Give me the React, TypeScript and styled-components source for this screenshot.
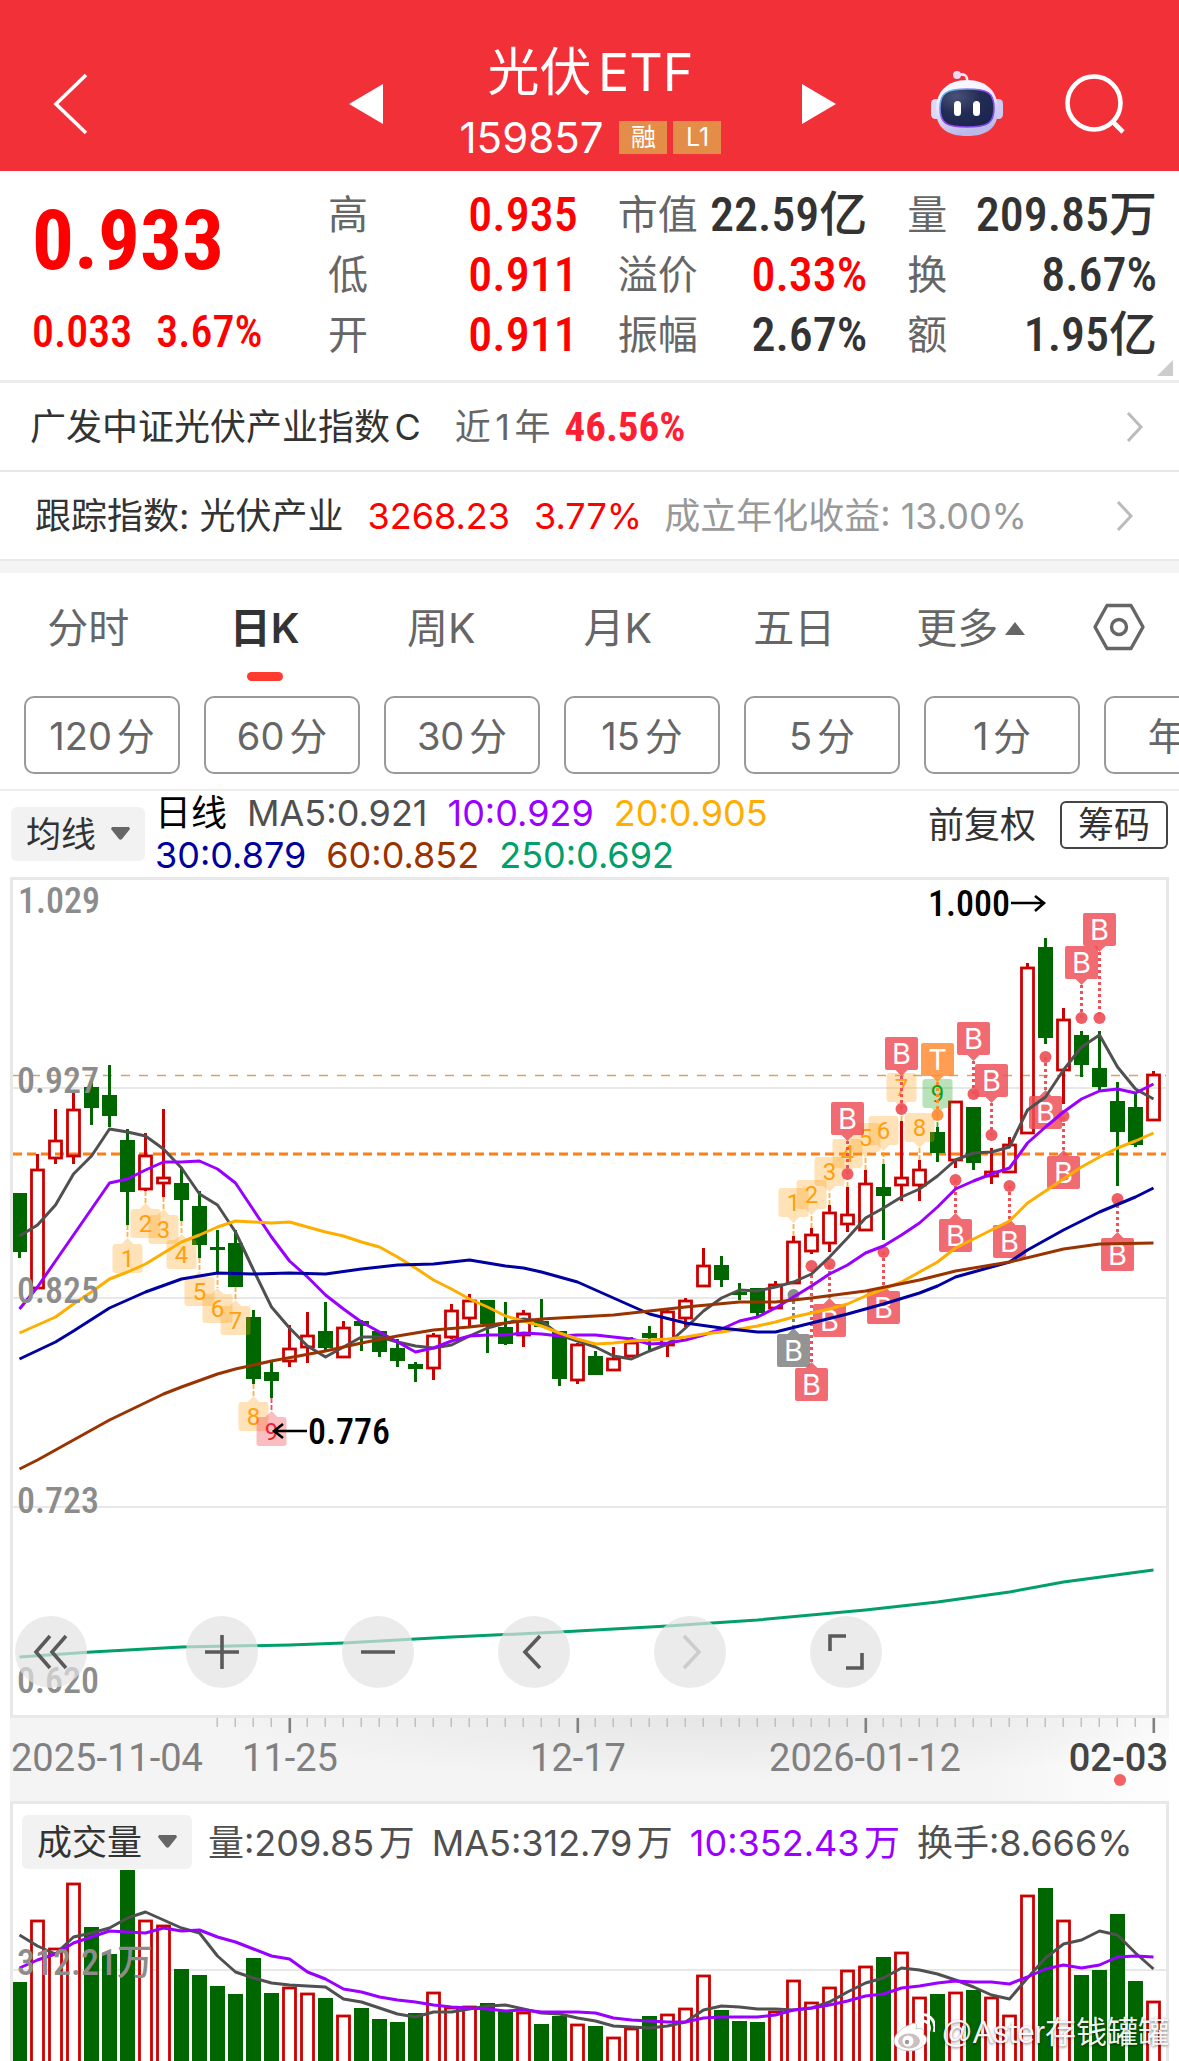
import React from "react";
import styled, { createGlobalStyle } from "styled-components";

const SANS = 'Inter, "Noto Sans CJK SC", sans-serif';
const DIN = '"Roboto Condensed", Roboto, "Noto Sans CJK SC", sans-serif';

const RED = "#ff0000";
const UP = "#cc0000";
const DOWN = "#006600";
const GRAY_LINE = "#505050";
const PURPLE = "#9900ff";
const AMBER = "#ffae00";
const NAVY = "#0000a0";
const BROWN = "#993300";
const TEAL = "#009f6b";
const GRID = "#e8e8e8";

const GlobalStyle = createGlobalStyle`
  *, *::before, *::after { box-sizing: border-box; }
  body { margin: 0; background: #fff; font-family: ${SANS}; color: #333; text-autospace: normal; }
  button, select { font: inherit; color: inherit; border: 0; background: none; padding: 0; margin: 0; cursor: pointer; text-autospace: inherit; }
  a { color: inherit; text-decoration: none; }
  svg { display: block; }
`;

const Page = styled.main`
  position: relative;
  width: 100%;
  overflow: hidden;
`;

/* ---------- header ---------- */

const Header = styled.header`
  display: grid;
  grid-template-columns: 1fr 488px 1fr;
  align-items: center;
  height: 171px;
  padding: 36px 0 0 6px;
  background: #f23038;
  color: #fff;
`;

const HeaderLeft = styled.div`
  padding-left: 46px;
`;

const HeaderCenter = styled.div`
  display: flex;
  align-items: center;
  justify-content: space-between;
`;

const HeaderRight = styled.div`
  display: flex;
  align-items: center;
  justify-content: flex-end;
  gap: 61px;
  padding-right: 53px;
`;

const IconButton = styled.button`
  display: block;
`;

const TitleBlock = styled.div`
  padding: 2px 4px 0 0;
  text-align: center;
`;

const Title = styled.h1`
  margin: 0;
  font-size: 52px;
  line-height: 66px;
  font-weight: 400;
`;

const CodeRow = styled.div`
  display: flex;
  align-items: center;
  justify-content: center;
  gap: 6px;
  height: 64px;
  font-size: 42px;
`;

const Code = styled.span`
  padding-right: 10px;
`;

const Badge = styled.span`
  width: 48px;
  height: 33px;
  background: #e38d49;
  font-size: 25px;
  line-height: 32px;
  text-align: center;
`;

/* ---------- quote ---------- */

const Quote = styled.section`
  position: relative;
  display: flex;
  height: 212px;
  padding: 14px 22px 0 32px;
  border-bottom: 3px solid #ececec;
  text-autospace: no-autospace;
`;

const PriceBlock = styled.div`
  flex: 0 0 296px;
  color: ${RED};
  font-family: ${DIN};
  font-weight: 500;
`;

const Price = styled.div`
  font-size: 83px;
  font-weight: 700;
  line-height: 112px;
`;

const Change = styled.div`
  display: flex;
  gap: 24px;
  font-size: 44px;
  line-height: 50px;
  padding-top: 10px;
`;

const Stats = styled.dl`
  flex: 1;
  display: grid;
  grid-template-columns: repeat(3, 1fr);
  grid-template-rows: repeat(3, 60px);
  column-gap: 40px;
  margin: 0;
`;

const Stat = styled.div`
  display: flex;
  justify-content: space-between;
  align-items: center;
  line-height: 60px;
  white-space: nowrap;
`;

const StatLabel = styled.dt`
  font-size: 40px;
  color: #666;
`;

const StatValue = styled.dd<{ $color?: string }>`
  margin: 0;
  font-family: ${DIN};
  font-weight: 500;
  font-size: 48px;
  color: ${(p) => p.$color || "#333"};
`;

const Corner = styled.svg`
  position: absolute;
  right: 6px;
  bottom: 4px;
`;

/* ---------- linked rows ---------- */

const LinkRow = styled.a<{ $indent: number; $end: number }>`
  display: flex;
  align-items: center;
  height: 89px;
  padding: 0 ${(p) => p.$end}px 0 ${(p) => p.$indent}px;
  border-bottom: 2px solid #e8e8e8;
  font-size: 36px;
  line-height: 48px;
  white-space: nowrap;
`;

const Cell = styled.span<{ $color?: string; $gap?: number; $weight?: number }>`
  color: ${(p) => p.$color || "#333"};
  margin-left: ${(p) => p.$gap || 0}px;
  font-weight: ${(p) => p.$weight || 400};
`;

const RowValue = styled(Cell)`
  font-family: ${DIN};
  font-size: 41px;
`;

const RowChevron = styled.svg`
  margin-left: auto;
`;

const Band = styled.div`
  height: 12px;
  background: #f4f4f4;
`;

/* ---------- period tabs ---------- */

const Tabs = styled.nav`
  display: grid;
  grid-template-columns: repeat(6, 1fr) 120px;
  height: 123px;
  padding-top: 30px;
  text-autospace: no-autospace;
`;

const Tab = styled.button<{ $active?: boolean }>`
  display: flex;
  flex-direction: column;
  align-items: center;
  font-size: 41px;
  line-height: 50px;
  font-weight: ${(p) => (p.$active ? 600 : 400)};
  color: ${(p) => (p.$active ? "#333" : "#666")};

  &::after {
    content: "";
    width: 36px;
    height: 9px;
    margin-top: 19px;
    border-radius: 5px;
    background: ${(p) => (p.$active ? "#ff3b30" : "transparent")};
  }
`;

const TabLabel = styled.span`
  display: flex;
  align-items: center;
  gap: 7px;
`;

const Chips = styled.div`
  display: flex;
  gap: 24px;
  padding: 0 0 15px 24px;
  border-bottom: 2px solid #ececec;
  overflow: hidden;
`;

const Chip = styled.button`
  flex: 0 0 156px;
  height: 78px;
  padding-bottom: 4px;
  border: 2px solid #999;
  border-radius: 10px;
  font-size: 38px;
  color: #666;
`;

/* ---------- indicator legends ---------- */

const Legend = styled.div`
  display: flex;
  align-items: center;
  height: 86px;
  padding: 0 11px;
`;

const Picker = styled.label<{ $w: number }>`
  position: relative;
  flex: 0 0 ${(p) => p.$w}px;
  height: 54px;
  border-radius: 6px;
  background: #f2f2f2;

  select {
    width: 100%;
    height: 54px;
    padding-left: 15px;
    appearance: none;
    font-size: 35px;
    color: #333;
  }
  svg {
    position: absolute;
    right: 15px;
    top: 20px;
    pointer-events: none;
  }
`;

const LegendLines = styled.div`
  flex: 1;
  padding-left: 10px;
  font-size: 36px;
  line-height: 42px;
`;

const LegendLine = styled.div`
  display: flex;
  gap: 20px;
`;

const Tint = styled.span<{ $color: string }>`
  color: ${(p) => p.$color};
  white-space: nowrap;
`;

const LegendActions = styled.div`
  display: flex;
  align-items: center;
  align-self: flex-start;
  gap: 24px;
  padding-top: 5px;
  font-size: 36px;
`;

const PlainButton = styled.button`
  padding-bottom: 6px;
  color: #333;
`;

const OutlineButton = styled.button`
  width: 108px;
  height: 48px;
  border: 2px solid #444;
  border-radius: 6px;
  line-height: 42px;
`;

/* ---------- charts ---------- */

const ChartFrame = styled.section`
  position: relative;
  margin: 0 10px;
  border: 3px solid ${GRID};

  > svg {
    width: 100%;
    height: auto;
  }
`;

const ChartTools = styled.div`
  position: absolute;
  left: 2px;
  bottom: 27px;
  display: flex;
  gap: 84px;

  button:first-child {
    margin-right: 15px;
  }
`;

const RoundButton = styled.button`
  width: 72px;
  height: 72px;
  border-radius: 50%;
  background: rgba(227, 227, 227, 0.7);
  display: grid;
  place-items: center;
`;

const Ruler = styled.div`
  margin: 0 10px;
  background: radial-gradient(ellipse 46% 75% at 62% 0, #e6e6e6, rgba(230, 230, 230, 0)),
    linear-gradient(90deg, #f4f4f4 84%, #fdfdfd 98%);

  svg {
    width: 100%;
    height: auto;
  }
`;

const VolumeFrame = styled(ChartFrame)`
  border-bottom: 0;
`;

const VolumeLegend = styled.div`
  display: flex;
  align-items: center;
  height: 66px;
  padding: 10px 0 0 9px;
  font-size: 36px;
  white-space: nowrap;
`;

const VolumeItems = styled.div`
  display: flex;
  gap: 17px;
  padding: 0 0 4px 16px;
`;

const Watermark = styled.div`
  position: absolute;
  right: 10px;
  bottom: 6px;
  display: flex;
  align-items: center;
  gap: 6px;
  color: rgba(255, 255, 255, 0.95);
  font-size: 31px;
  line-height: 44px;
  font-family: "Liberation Sans", "Noto Sans CJK SC", sans-serif;
  text-autospace: no-autospace;
  text-shadow: 0 1px 3px rgba(0, 0, 0, 0.55);
`;

/* ---------- data ---------- */

const STEP = 18;
const FIRST = 19.5;
const cx = (i: number) => FIRST + i * STEP;

/* rise flag, high, body top, body bottom, low */
const candles: [0 | 1, number, number, number, number][] = [
  [0, 1193, 1193, 1252, 1258], [1, 1154, 1169, 1289, 1289], [1, 1109, 1140, 1159, 1164], [1, 1092, 1109, 1157, 1164],
  [0, 1080, 1087, 1108, 1125], [0, 1065, 1095, 1116, 1127], [0, 1129, 1140, 1192, 1225], [1, 1133, 1155, 1190, 1191],
  [1, 1109, 1177, 1184, 1197], [0, 1167, 1183, 1200, 1221], [0, 1191, 1206, 1245, 1258], [0, 1230, 1247, 1250, 1273],
  [0, 1230, 1243, 1287, 1287], [0, 1310, 1317, 1379, 1384], [0, 1360, 1372, 1381, 1398], [1, 1325, 1348, 1362, 1367],
  [1, 1312, 1335, 1348, 1363], [0, 1302, 1331, 1348, 1350], [1, 1321, 1327, 1358, 1358], [0, 1320, 1321, 1326, 1351],
  [0, 1331, 1331, 1352, 1357], [0, 1339, 1348, 1361, 1367], [0, 1362, 1364, 1369, 1382], [1, 1333, 1335, 1369, 1380],
  [1, 1304, 1310, 1338, 1339], [1, 1294, 1300, 1319, 1327], [0, 1300, 1300, 1324, 1353], [0, 1302, 1327, 1344, 1345],
  [1, 1310, 1313, 1336, 1347], [0, 1299, 1321, 1327, 1327], [0, 1331, 1331, 1379, 1386], [1, 1343, 1344, 1381, 1384],
  [0, 1351, 1356, 1375, 1375], [1, 1347, 1358, 1371, 1371], [1, 1337, 1342, 1357, 1357], [0, 1326, 1333, 1338, 1351],
  [1, 1310, 1311, 1346, 1357], [1, 1298, 1300, 1319, 1327], [1, 1248, 1265, 1287, 1287], [0, 1256, 1265, 1280, 1287],
  [0, 1283, 1292, 1295, 1300], [0, 1288, 1288, 1313, 1317], [1, 1281, 1284, 1309, 1309], [1, 1236, 1241, 1284, 1284],
  [1, 1228, 1234, 1252, 1254], [1, 1205, 1212, 1244, 1252], [1, 1187, 1214, 1225, 1232], [1, 1170, 1183, 1231, 1231],
  [0, 1164, 1187, 1196, 1240], [1, 1121, 1177, 1186, 1201], [1, 1160, 1169, 1186, 1201], [0, 1127, 1132, 1153, 1162],
  [1, 1101, 1101, 1161, 1168], [0, 1107, 1107, 1163, 1170], [1, 1148, 1171, 1177, 1184], [1, 1137, 1144, 1173, 1173],
  [1, 963, 967, 1134, 1134], [0, 938, 947, 1038, 1044], [1, 1008, 1019, 1071, 1104], [0, 1031, 1035, 1065, 1077],
  [0, 1031, 1068, 1087, 1090], [0, 1082, 1101, 1132, 1186], [0, 1093, 1107, 1145, 1147], [1, 1071, 1074, 1121, 1121],
];

const ma5 = [
  1236, 1225, 1205, 1174, 1156, 1129, 1132, 1136, 1149, 1168, 1194, 1205, 1232, 1270, 1307, 1328, 1346, 1357, 1347, 1337, 1337,
  1342, 1346, 1348, 1345, 1336, 1328, 1323, 1319, 1321, 1335, 1341, 1347, 1356, 1359, 1351, 1344, 1328, 1311, 1298, 1290, 1291,
  1287, 1282, 1274, 1257, 1238, 1218, 1208, 1197, 1189, 1176, 1160, 1153, 1152, 1147, 1110, 1097, 1070, 1047, 1035, 1067, 1089, 1099,
];

const ma10 = [
  1309, 1287, 1261, 1235, 1209, 1183, 1179, 1170, 1162, 1162, 1161, 1169, 1183, 1210, 1237, 1261, 1277, 1295, 1309, 1322, 1332,
  1342, 1352, 1348, 1341, 1336, 1335, 1335, 1333, 1334, 1336, 1335, 1335, 1337, 1339, 1344, 1343, 1340, 1335, 1329, 1321, 1317,
  1308, 1297, 1286, 1274, 1265, 1253, 1246, 1235, 1223, 1207, 1189, 1181, 1174, 1168, 1143, 1127, 1112, 1099, 1091, 1089, 1093, 1084,
];

const ma20 = [
  1333, 1325, 1317, 1304, 1292, 1279, 1272, 1264, 1253, 1242, 1235, 1227, 1221, 1222, 1223, 1222, 1227, 1232, 1236, 1242, 1247,
  1257, 1268, 1280, 1289, 1299, 1307, 1316, 1321, 1326, 1333, 1339, 1344, 1343, 1341, 1340, 1339, 1337, 1334, 1332, 1329, 1326,
  1322, 1317, 1313, 1309, 1304, 1296, 1289, 1282, 1272, 1262, 1248, 1239, 1230, 1221, 1203, 1191, 1179, 1167, 1157, 1148, 1141, 1133,
];

/* slower averages are sampled sparsely: index, y */
const ma30: [number, number][] = [
  [0, 1359], [2, 1342], [3, 1331], [5, 1308], [7, 1292], [9, 1279], [11, 1273], [13, 1274], [15, 1273], [17, 1274], [19, 1269],
  [21, 1265], [23, 1264], [25, 1260], [27, 1266], [28, 1268], [29, 1272], [30, 1277], [31, 1282], [33, 1298], [35, 1314],
  [37, 1323], [39, 1328], [41, 1332], [42, 1332], [44, 1323], [46, 1314], [48, 1304], [50, 1293], [51, 1286], [52, 1277],
  [53, 1272], [55, 1262], [56, 1250], [58, 1230], [60, 1212], [62, 1197], [63, 1188],
];

const ma60: [number, number][] = [
  [0, 1469], [1, 1460], [3, 1440], [5, 1420], [8, 1394], [9, 1387], [11, 1374], [12, 1369], [14, 1361], [17, 1351], [19, 1343],
  [21, 1336], [23, 1330], [25, 1327], [29, 1319], [33, 1315], [37, 1307], [40, 1302], [42, 1302], [44, 1298], [47, 1291],
  [50, 1280], [52, 1271], [55, 1262], [58, 1249], [60, 1244], [63, 1243],
];

const ma250: [number, number][] = [
  [0, 1657], [4, 1652], [7, 1649], [9, 1647], [15, 1645], [18, 1643], [24, 1637], [30, 1632], [36, 1626], [41, 1620], [47, 1610],
  [51, 1602], [55, 1592], [58, 1582], [63, 1570],
];

const lineFrom = (ys: number[]) => ys.map((y, i) => `${cx(i)},${y}`).join(" ");
const lineFromPairs = (ps: [number, number][]) => ps.map(([i, y]) => `${cx(i)},${y}`).join(" ");

/* bar top for each session */
const volumes = [
  1982, 1920, 1948, 1883, 1927, 1954, 1870, 1920, 1925, 1969, 1975, 1986, 1994, 1958, 1993, 1987, 1993, 1998, 2015, 2008, 2019,
  2022, 2013, 1992, 2007, 2006, 2003, 2011, 2012, 2024, 2016, 2024, 2026, 2037, 2028, 2016, 2014, 2008, 1975, 2010, 2021, 2022,
  2011, 1980, 2002, 1987, 1970, 1966, 1957, 1952, 1997, 1994, 1992, 1990, 1997, 2015, 1895, 1888, 1920, 1975, 1970, 1914, 1981, 2001,
];

const vol5 = [
  1935, 1946, 1954, 1937, 1933, 1928, 1918, 1912, 1920, 1928, 1933, 1956, 1972, 1978, 1983, 1985, 1986, 1987, 1999, 2002, 2008,
  2014, 2017, 2012, 2012, 2009, 2006, 2005, 2009, 2013, 2014, 2018, 2021, 2026, 2027, 2028, 2026, 2022, 2010, 2006, 2007, 2009,
  2009, 2010, 2008, 2002, 1992, 1983, 1978, 1968, 1970, 1974, 1980, 1987, 1995, 1999, 1978, 1958, 1944, 1940, 1931, 1935, 1953, 1969,
];

const vol10 = [
  1968, 1960, 1954, 1943, 1937, 1931, 1932, 1933, 1928, 1931, 1930, 1937, 1942, 1949, 1956, 1959, 1972, 1979, 1989, 1992, 1997,
  2000, 2002, 2005, 2007, 2008, 2009, 2011, 2010, 2012, 2012, 2012, 2013, 2018, 2020, 2021, 2022, 2022, 2018, 2017, 2017, 2017,
  2015, 2010, 2008, 2005, 2001, 1996, 1994, 1988, 1986, 1983, 1981, 1982, 1982, 1984, 1977, 1969, 1965, 1968, 1965, 1957, 1956, 1957,
];

/* numbered sequence tags: index, tag top, label, placed above the candle, tone */
const counts: [number, number, string, boolean, string][] = [
  [6, 1244, "1", false, "#ff9f0f"], [7, 1209, "2", false, "#ff9f0f"], [8, 1215, "3", false, "#ff9f0f"],
  [9, 1240, "4", false, "#ff9f0f"], [10, 1277, "5", false, "#ff9f0f"], [11, 1294, "6", false, "#ff9f0f"],
  [12, 1306, "7", false, "#ff9f0f"], [13, 1402, "8", false, "#ff9f0f"], [14, 1417, "9", false, "#f02030"],
  [43, 1188, "1", true, "#ff9f0f"], [44, 1180, "2", true, "#ff9f0f"], [45, 1157, "3", true, "#ff9f0f"],
  [46, 1139, "4", true, "#ff9f0f"], [47, 1123, "5", true, "#ff9f0f"], [48, 1116, "6", true, "#ff9f0f"],
  [49, 1073, "7", true, "#ff9f0f"], [50, 1113, "8", true, "#ff9f0f"], [51, 1079, "9", true, "#10a010"],
];

/* trade tags: index, tag top, dot centre, label, tone */
const trades: [number, number, number, string, string][] = [
  [43, 1334, 1295, "B", "#808080"], [44, 1368, 1266, "B", "#ef5058"], [45, 1304, 1264, "B", "#ef5058"],
  [46, 1102, 1174, "B", "#ef5058"], [48, 1291, 1252, "B", "#ef5058"], [49, 1037, 1109, "B", "#ef5058"],
  [51, 1043, 1115, "T", "#ff8c32"], [52, 1219, 1180, "B", "#ef5058"], [53, 1022, 1094, "B", "#ef5058"],
  [54, 1064, 1135, "B", "#ef5058"], [55, 1225, 1186, "B", "#ef5058"], [57, 1096, 1057, "B", "#ef5058"],
  [58, 1156, 1116, "B", "#ef5058"], [59, 946, 1018, "B", "#ef5058"], [60, 913, 1018, "B", "#ef5058"],
  [61, 1238, 1199, "B", "#ef5058"],
];

/* ---------- chart pieces ---------- */

function Candle({ i }: { i: number }) {
  const [up, high, top, bottom, low] = candles[i];
  const x = cx(i);
  if (!up) {
    return (
      <g fill={DOWN}>
        <rect x={x - 1.5} y={high} width={3} height={low - high} />
        <rect x={x - 7.5} y={top} width={15} height={bottom - top} />
      </g>
    );
  }
  return (
    <g fill={UP}>
      <rect x={x - 1.5} y={high} width={3} height={top - high} />
      <rect x={x - 1.5} y={bottom} width={3} height={low - bottom} />
      <rect x={x - 6} y={top + 1} width={12} height={bottom - top - 2} fill="none" stroke={UP} strokeWidth={2.8} />
    </g>
  );
}

function CountTag({ i, top, label, above, tone }: { i: number; top: number; label: string; above: boolean; tone: string }) {
  const x = cx(i);
  const edge = above ? candles[i][1] : candles[i][4];
  const base = above ? top + 29 : top;
  const tip = above ? base + 6 : base - 6;
  return (
    <g>
      <line x1={x} x2={x} y1={edge} y2={tip} stroke={tone} strokeWidth={1.8} strokeDasharray="5 2" opacity={0.8} />
      <g fill={tone} opacity={0.29}>
        <rect x={x - 15} y={top} width={30} height={29} rx={3} />
        <path d={`M${x - 6} ${base}L${x} ${tip}L${x + 6} ${base}Z`} />
      </g>
      <text x={x} y={top + 23} fontFamily="Roboto, sans-serif" fontSize={24} textAnchor="middle" fill={tone}>
        {label}
      </text>
    </g>
  );
}

function TradeTag({ i, top, dot, label, tone }: { i: number; top: number; dot: number; label: string; tone: string }) {
  const x = cx(i);
  const above = top < dot;
  const base = above ? top + 33 : top;
  const tip = above ? base + 6 : base - 6;
  return (
    <g>
      <line x1={x} x2={x} y1={tip} y2={dot} stroke={tone} strokeWidth={3} strokeDasharray="3 3" />
      <circle cx={x} cy={dot} r={6} fill={tone} opacity={0.92} />
      <g fill={tone} opacity={0.84}>
        <rect x={x - 16.5} y={top} width={33} height={33} rx={2} />
        <path d={`M${x - 6} ${base}L${x} ${tip}L${x + 6} ${base}Z`} />
      </g>
      <text x={x} y={top + 27} fontFamily="Inter, sans-serif" fontSize={29} textAnchor="middle" fill="#fff">
        {label}
      </text>
    </g>
  );
}

const axisText = { fontFamily: DIN, fontSize: 36, fontWeight: 500, fill: "#8c8c8c" };

function PriceChart() {
  return (
    <svg viewBox="13 880 1153 835" role="img" aria-label="日K线">
      {[1088, 1298, 1507].map((y) => (
        <rect key={y} x={13} y={y - 1} width={1153} height={2} fill={GRID} />
      ))}
      <line x1={13} x2={1166} y1={1075.5} y2={1075.5} stroke="#d9a35c" strokeWidth={1.4} strokeDasharray="9 9" />
      <line x1={13} x2={1166} y1={1154} y2={1154} stroke="#ff7f14" strokeWidth={3.2} strokeDasharray="9 5" />
      {candles.map((_, i) => (
        <Candle key={i} i={i} />
      ))}
      {counts.map(([i, top, label, above, tone]) => (
        <CountTag key={i} i={i} top={top} label={label} above={above} tone={tone} />
      ))}
      {trades.map(([i, top, dot, label, tone]) => (
        <TradeTag key={i} i={i} top={top} dot={dot} label={label} tone={tone} />
      ))}
      <g fill="none" strokeWidth={3} strokeLinejoin="round">
        <polyline points={lineFrom(ma5)} stroke={GRAY_LINE} />
        <polyline points={lineFrom(ma10)} stroke={PURPLE} />
        <polyline points={lineFrom(ma20)} stroke={AMBER} />
        <polyline points={lineFromPairs(ma30)} stroke={NAVY} />
        <polyline points={lineFromPairs(ma60)} stroke={BROWN} />
        <polyline points={lineFromPairs(ma250)} stroke={TEAL} />
      </g>
      <g {...axisText}>
        <text x={18} y={913}>1.029</text>
        <text x={17} y={1093}>0.927</text>
        <text x={17} y={1303}>0.825</text>
        <text x={17} y={1513}>0.723</text>
        <text x={17} y={1693}>0.620</text>
      </g>
      <g fontFamily={DIN} fontSize={36} fontWeight={500} fill="#000">
        <text x={928} y={916}>1.000</text>
        <text x={308} y={1444}>0.776</text>
      </g>
      <g fill="none" stroke="#000" strokeWidth={2.6}>
        <path d="M1011 903H1043M1035 896L1044 903L1035 911" />
        <path d="M307 1431H275M283 1424L274 1431L283 1438" />
      </g>
    </svg>
  );
}

function TimeRuler() {
  const ticks = Array.from({ length: 53 }, (_, k) => k + 11);
  return (
    <svg viewBox="10 1718 1159 83" role="img" aria-label="日期">
      {ticks.map((i) => {
        const major = i % 16 === 15;
        return (
          <rect
            key={i}
            x={cx(i) - 1}
            y={1718}
            width={major ? 2.6 : 1.5}
            height={major ? 15 : 9}
            fill={major ? "#808080" : "#c0c0c0"}
          />
        );
      })}
      <g fontFamily="Roboto, sans-serif" fontSize={38} fill="#808080">
        <text x={11} y={1771}>2025-11-04</text>
        <text x={290} y={1771} textAnchor="middle">11-25</text>
        <text x={578} y={1771} textAnchor="middle">12-17</text>
        <text x={865} y={1771} textAnchor="middle">2026-01-12</text>
        <text x={1168} y={1771} textAnchor="end" fill="#444" fontWeight={500}>02-03</text>
      </g>
      <circle cx={1120} cy={1780} r={6} fill="#f56060" />
    </svg>
  );
}

function VolumeChart() {
  return (
    <svg viewBox="13 1870 1153 191" role="img" aria-label="成交量">
      <rect x={13} y={1969} width={1153} height={2} fill={GRID} />
      {volumes.map((top, i) =>
        candles[i][0] ? (
          <rect key={i} x={cx(i) - 6} y={top + 1} width={12} height={220} fill="#fff" stroke={UP} strokeWidth={2.8} />
        ) : (
          <rect key={i} x={cx(i) - 7.5} y={top} width={15} height={220} fill={DOWN} />
        )
      )}
      <g fill="none" strokeWidth={3} strokeLinejoin="round">
        <polyline points={lineFrom(vol5)} stroke={GRAY_LINE} />
        <polyline points={lineFrom(vol10)} stroke={PURPLE} />
      </g>
      <VolumeScale x={17} y={1975} {...axisText}>312.21万</VolumeScale>
    </svg>
  );
}

const VolumeScale = styled.text`
  text-autospace: no-autospace;
`;

/* ---------- icons ---------- */

const BackIcon = () => (
  <svg width="36" height="62" viewBox="0 0 36 62" fill="none" stroke="#fff" strokeWidth="3.6">
    <path d="M34 2L4 31L34 60" />
  </svg>
);

const Triangle = ({ flip }: { flip?: boolean }) => (
  <svg width="34" height="40" viewBox="0 0 34 40" fill="#fff">
    <path d={flip ? "M0 0L34 20L0 40Z" : "M34 0L0 20L34 40Z"} />
  </svg>
);

const RobotIcon = () => (
  <svg width="72" height="68" viewBox="0 0 72 68">
    <defs>
      <linearGradient id="shell" x1="0" y1="0" x2="0.3" y2="1">
        <stop offset="0.3" stopColor="#f8f6ff" />
        <stop offset="1" stopColor="#bcb8ea" />
      </linearGradient>
      <linearGradient id="rim" x1="0" y1="0" x2="1" y2="1">
        <stop offset="0" stopColor="#58d8e8" />
        <stop offset="0.5" stopColor="#9a3ff0" />
        <stop offset="1" stopColor="#6a50f0" />
      </linearGradient>
      <radialGradient id="visor" cx="0.3" cy="0.2" r="0.9">
        <stop offset="0" stopColor="#4a5278" />
        <stop offset="0.5" stopColor="#232c54" />
        <stop offset="1" stopColor="#1b2450" />
      </radialGradient>
    </defs>
    <path d="M27 5C34 3 37 6 36 13" fill="none" stroke="#f0eaff" strokeWidth="2.6" />
    <circle cx="26" cy="5" r="4" fill="#e9dcf6" />
    <rect x="0" y="29" width="10" height="20" rx="4.5" fill="#dcd8f8" />
    <rect x="62" y="29" width="10" height="20" rx="4.5" fill="#cfc9f4" />
    <path d="M36 10C56 10 67 22 67 40C67 58 56 66 36 66C16 66 5 58 5 40C5 22 16 10 36 10Z" fill="url(#shell)" />
    <path
      d="M36 19C57 19 63 23 63 38C63 53 57 57 36 57C15 57 9 53 9 38C9 23 15 19 36 19Z"
      fill="url(#visor)"
      stroke="url(#rim)"
      strokeWidth="1.6"
    />
    <rect x="23" y="31" width="7" height="15" rx="3.5" fill="#fff" />
    <rect x="42" y="31" width="7" height="15" rx="3.5" fill="#fff" />
  </svg>
);

const SearchIcon = () => (
  <svg width="62" height="62" viewBox="0 0 62 62" fill="none" stroke="#fff" strokeWidth="4.6">
    <circle cx="30" cy="30" r="26.5" />
    <path d="M48.5 48.5L59 59" />
  </svg>
);

const ChevronRight = () => (
  <RowChevron width="18" height="32" viewBox="0 0 18 32" fill="none" stroke="#bbb" strokeWidth="3">
    <path d="M2 2L15 16L2 30" />
  </RowChevron>
);

const CaretDown = () => (
  <svg width="19" height="13" viewBox="0 0 19 13" fill="#666">
    <path d="M1 0H18L19 2L11 12Q9.5 13.5 8 12L0 2Z" />
  </svg>
);

const HexIcon = () => (
  <svg width="52" height="48" viewBox="0 0 52 48" fill="none" stroke="#666" strokeWidth="3.4" strokeLinejoin="round">
    <path d="M14 2.5H38L50 24L38 45.5H14L2 24Z" />
    <circle cx="26" cy="24" r="7.5" />
  </svg>
);

const ToolIcon = ({ d, faded }: { d: string; faded?: boolean }) => (
  <svg width="36" height="36" viewBox="0 0 36 36" fill="none" stroke={faded ? "#ccc" : "#5a5a5a"} strokeWidth="3.6">
    <path d={d} />
  </svg>
);

const WeiboIcon = () => (
  <svg width="42" height="40" viewBox="0 0 42 40">
    <path
      d="M16 12C22 8 25 11 23 16C29 14 32 17 30 21C39 26 30 38 17 38C8 38 1 34 1 28C1 22 8 15 16 12Z"
      fill="#fff"
      stroke="#bbb"
      strokeWidth="0.8"
    />
    <ellipse cx="16" cy="28" rx="11" ry="7.5" fill="#b9a9a9" opacity="0.75" />
    <circle cx="15" cy="28" r="5.5" fill="#fff" />
    <circle cx="14" cy="29" r="2.2" fill="#999" />
    <path d="M28 8C34 7 38 12 36 18M27 2C37 0 44 9 41 19" fill="none" stroke="#fff" strokeWidth="2.8" />
  </svg>
);

/* ---------- page ---------- */

const stats: [string, string, string?][] = [
  ["高", "0.935", RED], ["市值", "22.59亿"], ["量", "209.85万"],
  ["低", "0.911", RED], ["溢价", "0.33%", RED], ["换", "8.67%"],
  ["开", "0.911", RED], ["振幅", "2.67%"], ["额", "1.95亿"],
];

const tools: [string, string, boolean?][] = [
  ["最早", "M17 2L3 18L17 34M33 2L19 18L33 34"],
  ["放大", "M18 1V35M1 18H35"],
  ["缩小", "M1 18H35"],
  ["向左", "M24 2L9 18L24 34"],
  ["向右", "M12 2L27 18L12 34", true],
  ["全屏", "M18 2H2V17M18 34H34V19"],
];

export default function App() {
  return (
    <Page>
      <GlobalStyle />
      <Header>
        <HeaderLeft>
          <IconButton aria-label="返回"><BackIcon /></IconButton>
        </HeaderLeft>
        <HeaderCenter>
          <IconButton aria-label="上一只"><Triangle /></IconButton>
          <TitleBlock>
            <Title>光伏ETF</Title>
            <CodeRow>
              <Code>159857</Code>
              <Badge>融</Badge>
              <Badge>L1</Badge>
            </CodeRow>
          </TitleBlock>
          <IconButton aria-label="下一只"><Triangle flip /></IconButton>
        </HeaderCenter>
        <HeaderRight>
          <IconButton aria-label="助手"><RobotIcon /></IconButton>
          <IconButton aria-label="搜索"><SearchIcon /></IconButton>
        </HeaderRight>
      </Header>

      <Quote>
        <PriceBlock>
          <Price>0.933</Price>
          <Change><span>0.033</span><span>3.67%</span></Change>
        </PriceBlock>
        <Stats>
          {stats.map(([label, value, color]) => (
            <Stat key={label}>
              <StatLabel>{label}</StatLabel>
              <StatValue $color={color}>{value}</StatValue>
            </Stat>
          ))}
        </Stats>
        <Corner width="16" height="16" viewBox="0 0 16 16"><path d="M16 0V16H0Z" fill="#ccc" /></Corner>
      </Quote>

      <LinkRow href="#fund" $indent={30} $end={35}>
        <Cell>广发中证光伏产业指数C</Cell>
        <Cell $color="#666" $gap={34}>近1年</Cell>
        <RowValue $color="#ff1f35" $gap={14} $weight={700}>46.56%</RowValue>
        <ChevronRight />
      </LinkRow>
      <LinkRow href="#index" $indent={35} $end={45}>
        <Cell>跟踪指数: 光伏产业</Cell>
        <Cell $color={RED} $gap={24}>3268.23</Cell>
        <Cell $color={RED} $gap={24}>3.77%</Cell>
        <Cell $color="#999" $gap={22}>成立年化收益: 13.00%</Cell>
        <ChevronRight />
      </LinkRow>
      <Band />

      <Tabs>
        <Tab>分时</Tab>
        <Tab $active>日K</Tab>
        <Tab>周K</Tab>
        <Tab>月K</Tab>
        <Tab>五日</Tab>
        <Tab>
          <TabLabel>
            更多
            <svg width="20" height="13" viewBox="0 0 20 13" fill="#666"><path d="M10 0L20 13H0Z" /></svg>
          </TabLabel>
        </Tab>
        <Tab aria-label="设置"><HexIcon /></Tab>
      </Tabs>
      <Chips>
        {["120分", "60分", "30分", "15分", "5分", "1分", "年K"].map((c) => (
          <Chip key={c}>{c}</Chip>
        ))}
      </Chips>

      <Legend>
        <Picker $w={134}>
          <select aria-label="主图指标" defaultValue="均线"><option>均线</option></select>
          <CaretDown />
        </Picker>
        <LegendLines>
          <LegendLine>
            <Tint $color="#000">日线</Tint>
            <Tint $color={GRAY_LINE}>MA5:0.921</Tint>
            <Tint $color={PURPLE}>10:0.929</Tint>
            <Tint $color={AMBER}>20:0.905</Tint>
          </LegendLine>
          <LegendLine>
            <Tint $color={NAVY}>30:0.879</Tint>
            <Tint $color={BROWN}>60:0.852</Tint>
            <Tint $color={TEAL}>250:0.692</Tint>
          </LegendLine>
        </LegendLines>
        <LegendActions>
          <PlainButton>前复权</PlainButton>
          <OutlineButton>筹码</OutlineButton>
        </LegendActions>
      </Legend>

      <ChartFrame>
        <PriceChart />
        <ChartTools>
          {tools.map(([label, d, faded]) => (
            <RoundButton key={label} aria-label={label} disabled={faded}>
              <ToolIcon d={d} faded={faded} />
            </RoundButton>
          ))}
        </ChartTools>
      </ChartFrame>
      <Ruler>
        <TimeRuler />
      </Ruler>

      <VolumeFrame>
        <VolumeLegend>
          <Picker $w={170}>
            <select aria-label="副图指标" defaultValue="成交量"><option>成交量</option></select>
            <CaretDown />
          </Picker>
          <VolumeItems>
            <Tint $color={GRAY_LINE}>量:209.85万</Tint>
            <Tint $color={GRAY_LINE}>MA5:312.79万</Tint>
            <Tint $color={PURPLE}>10:352.43万</Tint>
            <Tint $color={GRAY_LINE}>换手:8.666%</Tint>
          </VolumeItems>
        </VolumeLegend>
        <VolumeChart />
      </VolumeFrame>

      <Watermark>
        <WeiboIcon />
        <span>@Aster存钱罐罐</span>
      </Watermark>
    </Page>
  );
}
